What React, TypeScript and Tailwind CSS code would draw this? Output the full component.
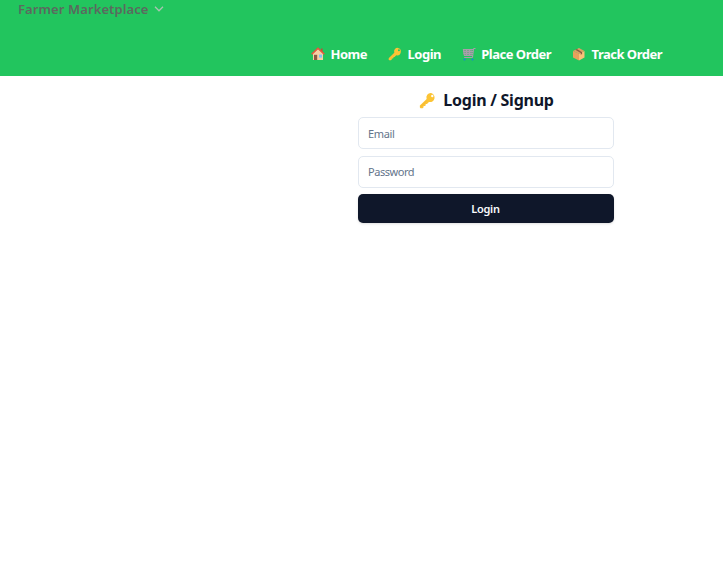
import type { ReactNode } from "react";

function HouseIcon() {
  return (
    <svg viewBox="0 0 14 14" className="h-3.5 w-3.5 shrink-0">
      <path d="M2 6.5 7 2l5 4.5V13H2z" fill="#f5d0a4" />
      <path d="M10 1.5h1.6v4L10 4z" fill="#b5533c" />
      <path d="M.7 7.2 7 1.2l6.3 6" fill="none" stroke="#f0503c" strokeWidth="1.5" />
      <path d="M3 7.8h3.2V13H3z" fill="#8b5a44" />
      <path d="M8 7.6h3v3H8z" fill="#7cc4f5" />
    </svg>
  );
}

function KeyIcon({ className }: { className: string }) {
  return (
    <svg viewBox="0 0 16 16" className={className}>
      <path
        fillRule="evenodd"
        d="M11.3 1a4.1 4.1 0 0 0-4.1 5.5L.8 12.8v1.7l.7.7h1.9l.9-.9v-1.1h1.3l.7-.7v-1.2h1.2l1.9-1.9A4.1 4.1 0 1 0 11.3 1Zm1.2 1.7a1.1 1.1 0 1 1 0 2.2 1.1 1.1 0 0 1 0-2.2Z"
        fill="#fcc435"
      />
      <path d="m1.6 14 5.6-5.7" stroke="#f3ad32" strokeWidth=".6" />
    </svg>
  );
}

function CartIcon() {
  return (
    <svg viewBox="0 0 14 14" className="h-3.5 w-3.5 shrink-0" fill="none">
      <path d="M1 2.5h9.7l-.8 6H2z" fill="#9b949d" fillOpacity=".75" />
      <path
        d="M13.5 1.5h-1.9L10.5 10.5H2.2M.9 2.5h10.4M1.2 4.5h10M1.6 6.5H11M2 8.5h8.8M1.5 2.5l.8 6M4.5 2.5v6M7.5 2.5v6"
        stroke="#aa9dac"
        strokeWidth="1"
      />
      <circle cx="2.5" cy="12.5" r="1" fill="#1683dc" />
      <circle cx="10.5" cy="12.5" r="1" fill="#1683dc" />
    </svg>
  );
}

function PackageIcon() {
  return (
    <svg viewBox="0 0 14 14" className="h-3.5 w-3.5 shrink-0">
      <path d="M1 4v6.6l6 2.9V6.5z" fill="#e7a05c" />
      <path d="M7 6.5v7l5.5-2.9V4z" fill="#f9c178" />
      <path d="M1 4 7 1l5.5 3L7 6.8z" fill="#dda263" />
      <path d="m3.3 2.8 5.4 3.1v1.8l1.4-.7V5.2L4.9 2.1z" fill="#8b5a43" />
    </svg>
  );
}

function NavItem({ icon, children, className }: { icon: ReactNode; children: ReactNode; className: string }) {
  return (
    <a href="#" className={`flex items-center justify-between whitespace-nowrap ${className}`}>
      {icon}
      <span>{children}</span>
    </a>
  );
}

export default function App() {
  return (
    <div className="min-h-[563px] bg-white font-['Noto_Sans','Open_Sans',sans-serif] text-[#0f172a]">
      <header className="flex h-[76px] flex-col justify-between bg-[#22c55e]">
        <button className="ml-[18px] flex h-[18px] items-center gap-[5px] text-[13px] font-semibold leading-[18px] text-[#5b695f]">
          <span className="w-[131px] whitespace-nowrap text-left tracking-[0.1px]">Farmer Marketplace</span>
          <svg viewBox="0 0 10 6" className="h-1.5 w-2.5" fill="none" stroke="#a9c5b2" strokeWidth="1.3">
            <path d="m1 .8 4 4 4-4" />
          </svg>
        </button>
        <nav className="mb-3 ml-[311px] flex h-5 gap-[21px] text-[13px] font-bold leading-5 tracking-[-0.5px] text-white">
          <NavItem className="w-14" icon={<HouseIcon />}>Home</NavItem>
          <NavItem className="w-[53px]" icon={<KeyIcon className="h-3.5 w-3.5 shrink-0" />}>Login</NavItem>
          <NavItem className="w-[89px]" icon={<CartIcon />}>Place Order</NavItem>
          <NavItem className="w-[90px]" icon={<PackageIcon />}>Track Order</NavItem>
        </nav>
      </header>
      <main className="ml-[358px] w-64 pt-3">
        <h1 className="flex h-6 items-center justify-center gap-[7px] pl-px text-base font-bold leading-6 tracking-[-0.25px]">
          <KeyIcon className="h-[17px] w-[17px]" />
          <span>Login / Signup</span>
        </h1>
        <form className="mt-[5px] flex flex-col text-[11px]">
          <input
            placeholder="Email"
            className="h-8 rounded-[5px] border border-[#e2e8f0] px-[9px] tracking-[-0.35px] placeholder:text-[#64748b]"
          />
          <input
            type="password"
            placeholder="Password"
            className="mt-[7px] h-8 rounded-[5px] border border-[#e2e8f0] px-[9px] pb-0.5 tracking-[-0.45px] placeholder:text-[#64748b]"
          />
          <button
            type="button"
            className="mt-1.5 h-[29px] rounded-[5px] bg-[#0f172a] pr-px pt-0.5 font-semibold tracking-[-0.3px] text-[#f8fafc] shadow-sm"
          >
            Login
          </button>
        </form>
      </main>
    </div>
  );
}
